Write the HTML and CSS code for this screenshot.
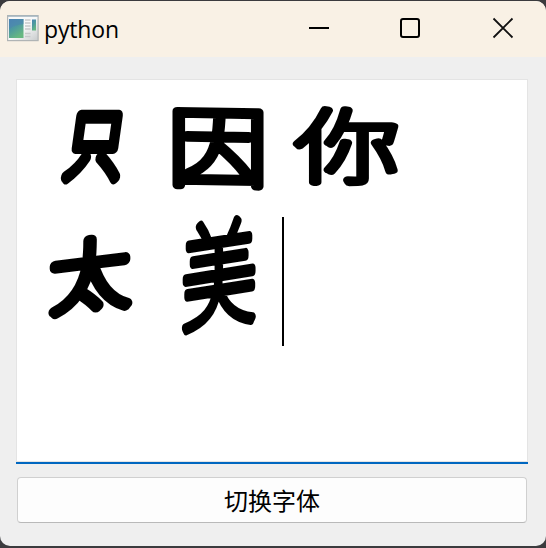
FILE: index.html
```html
<!DOCTYPE html>
<html lang="zh-CN">
<head>
<meta charset="utf-8">
<title>python</title>
<link rel="stylesheet" href="styles.css">
</head>
<body>
<div class="window">
  <header class="titlebar">
    <svg class="app-icon" width="32" height="27" viewBox="0 0 32 27">
      <defs>
        <linearGradient id="pane" x1="0" y1="0" x2=".5" y2="1"><stop offset="0" stop-color="#4a83b2"/><stop offset=".5" stop-color="#4d99a0"/><stop offset="1" stop-color="#66b881"/></linearGradient>
        <linearGradient id="frame" x1="0" y1="0" x2="1" y2="1"><stop offset=".5" stop-color="#f8f9f9"/><stop offset="1" stop-color="#c8cbcc"/></linearGradient>
      </defs>
      <rect x=".6" y=".6" width="30.5" height="25" fill="url(#frame)" stroke="#b0b4b5" stroke-width="1.2"/>
      <path d="M1 1.2H31" stroke="#a2b5c0" stroke-width="1.2"/>
      <rect x="2" y="4" width="14.5" height="19" fill="url(#pane)"/>
      <path d="M2 14Q7 10 16.500 9V4H2Z" fill="#4c83b5" opacity=".55"/>
      <path d="M18 5h5.500M18 8h5.500M18 11h5.500M18 14h5.500M18 18.500h5.500M18 21.500h5.500" stroke="#c6c9ca" stroke-width="1.300"/>
      <rect x="25" y="4.500" width="4" height="11" fill="url(#pane)"/>
    </svg>
    <span class="title">python</span>
    <div class="controls">
      <svg width="22" height="22" viewBox="0 0 22 22"><path d="M1 11H21" stroke="#000" stroke-width="2"/></svg>
      <svg width="22" height="22" viewBox="0 0 22 22"><rect x="1" y="2" width="18" height="18" rx="2" fill="none" stroke="#000" stroke-width="2"/></svg>
      <svg width="22" height="22" viewBox="0 0 22 22"><path d="M1.500 1.500L20.500 20.500M20.500 1.500L1.500 20.500" stroke="#111" stroke-width="1.800"/></svg>
    </div>
  </header>
  <main class="content">
    <div class="editor">
      <div class="line">
        <svg class="char" width="118" height="129"><text stroke-width="10.500" transform="translate(33 85) skewX(-8) scale(.57 .76)">只</text></svg>
        <svg class="char" width="118" height="129"><text stroke-width="9" transform="translate(20 91) skewY(1) scale(1 .87)">因</text></svg>
        <svg class="char" width="118" height="129"><text stroke-width="8.500" transform="translate(29 88) scale(1.040 .8)">你</text></svg>
      </div>
      <div class="line">
        <svg class="char" width="118" height="129"><text stroke-width="11" transform="translate(20 92) skewY(-7) scale(.8 .77)">太</text></svg>
        <svg class="char" width="118" height="129"><text stroke-width="8" transform="translate(33 107) skewY(-9) scale(.76 1.15)">美</text></svg>
        <i class="caret"></i>
      </div>
    </div>
    <button class="switch">切换字体</button>
  </main>
</div>
</body>
</html>
```
FILE: styles.css
```css
* { box-sizing: border-box; }
body { margin: 0; background: #3b3b3e; overflow: hidden; }
.window { width: 546px; height: 545px; margin-top: 1px; background: #efefef; border-radius: 10px; overflow: hidden; }
.titlebar { height: 56px; background: #f9f1e5; display: flex; align-items: center; padding: 0 32px 0 7px; }
.app-icon { flex: none; margin-top: -2px; }
.title { font: 23px/32px "Open Sans", "Noto Sans", sans-serif; margin: 0 0 0 5px; letter-spacing: -.15px; color: #000; }
.controls { margin-left: auto; display: flex; gap: 70px; margin: -3px 0 0 auto; }
.controls svg { display: block; }
.content { padding: 22px 18px 0 16px; }
.editor { width: 512px; height: 385px; background: #fff; box-shadow: inset 0 0 0 1px #e4e4e4; border-bottom: 2px solid #0067c0; padding: 9px 0 0 14px; }
.line { display: flex; height: 129px; }
.char { flex: none; overflow: visible; }
.char text { font: 100 100px "Noto Sans CJK SC", sans-serif; fill: #000; stroke: #000; stroke-linejoin: round; stroke-linecap: round; vector-effect: non-scaling-stroke; }
.caret { width: 2px; height: 129px; background: #000; margin-left: 16px; }
.switch { display: block; width: 510px; height: 46px; margin: 13px 0 0 1px; padding: 0; background: #fdfdfd; border: 1px solid #d0d0d0; border-bottom-color: #b9b9b9; border-radius: 4px; font: 24px/44px "Noto Sans CJK SC", sans-serif; color: #000; }
```
